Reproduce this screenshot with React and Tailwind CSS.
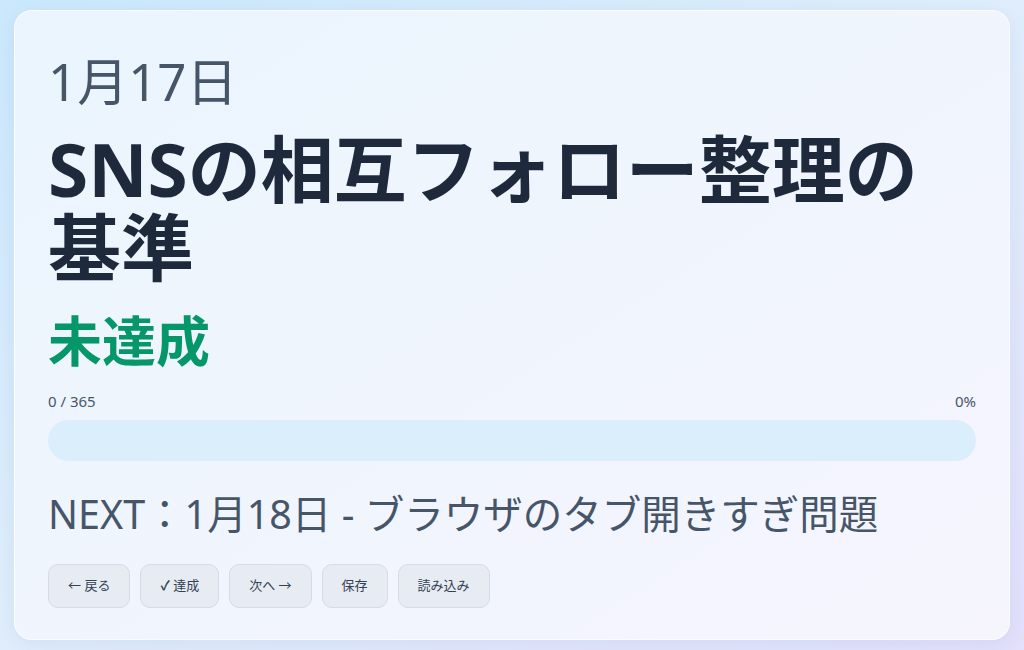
import React from "react";

const font = { fontFamily: '"Noto Sans", "Noto Sans CJK JP", sans-serif' };

function Btn({ children }) {
  return (
    <button className="h-[44px] px-[19px] rounded-[10px] border border-[#d5dce5] bg-[#e7ecf2] text-[13px] text-[#334155] leading-none">
      {children}
    </button>
  );
}

export default function App() {
  return (
    <div
      className="w-[1024px] h-[650px] px-[14px] py-[10px] bg-gradient-to-br from-[#cbe9fc] via-[#e0eefc] to-[#e3e1fb]"
      style={font}
    >
      <div className="h-[630px] rounded-[18px] bg-gradient-to-br from-[#eaf5fd] to-[#f6f5fe] border border-white/70 shadow-[0_4px_20px_rgba(100,120,180,0.12)] px-[33px] pt-[40px] flex flex-col">
        <div className="text-[51px] leading-[1.2] text-[#475569] font-normal">1月17日</div>
        <h1 className="text-[73px] leading-[1.07] font-bold text-[#1e293b] mt-[18px]">
          SNSの相互フォロー整理の基準
        </h1>
        <div className="text-[54px] leading-[1.2] font-bold text-[#059669] mt-[23px]">未達成</div>
        <div className="mt-[17px] flex justify-between text-[15px] text-[#475569] leading-[1.4]">
          <span>0 / 365</span>
          <span>0%</span>
        </div>
        <div className="mt-[8px] h-[41px] rounded-full bg-[#dbeefb]" />
        <div className="mt-[28px] text-[39.5px] leading-[1.3] text-[#475569]">
          NEXT：1月18日 - ブラウザのタブ開きすぎ問題
        </div>
        <div className="mt-[23px] flex gap-[10px]">
          <Btn>← 戻る</Btn>
          <Btn><span className="font-bold">✓</span> 達成</Btn>
          <Btn>次へ →</Btn>
          <Btn>保存</Btn>
          <Btn>読み込み</Btn>
        </div>
      </div>
    </div>
  );
}
